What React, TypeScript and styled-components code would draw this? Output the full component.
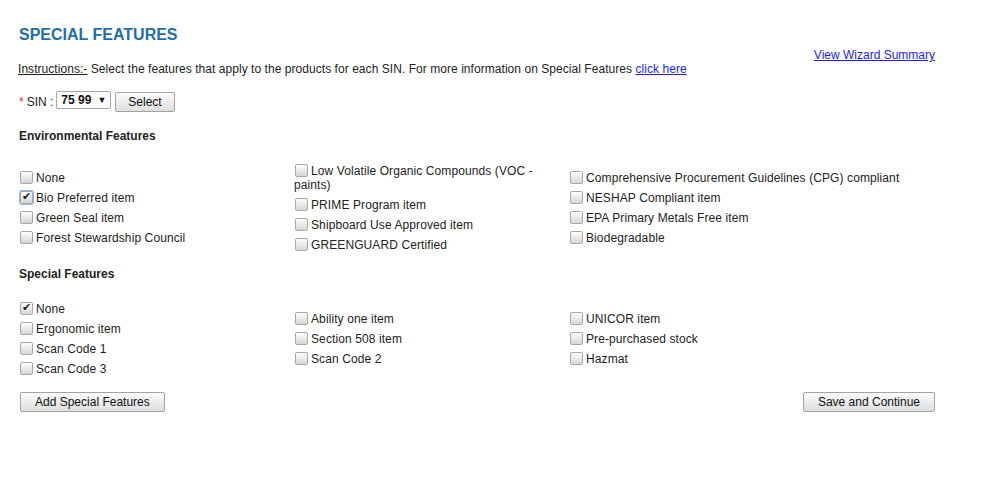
import * as React from 'react';
import styled, { createGlobalStyle } from 'styled-components';

interface Feature {
  title: string;
  checked?: boolean;
  focused?: boolean;
}

const environmental: Feature[][] = [
  [
    { title: 'None' },
    { title: 'Bio Preferred item', checked: true, focused: true },
    { title: 'Green Seal item' },
    { title: 'Forest Stewardship Council' },
  ],
  [
    { title: 'Low Volatile Organic Compounds (VOC - paints)' },
    { title: 'PRIME Program item' },
    { title: 'Shipboard Use Approved item' },
    { title: 'GREENGUARD Certified' },
  ],
  [
    { title: 'Comprehensive Procurement Guidelines (CPG) compliant' },
    { title: 'NESHAP Compliant item' },
    { title: 'EPA Primary Metals Free item' },
    { title: 'Biodegradable' },
  ],
];

const special: Feature[][] = [
  [
    { title: 'None', checked: true },
    { title: 'Ergonomic item' },
    { title: 'Scan Code 1' },
    { title: 'Scan Code 3' },
  ],
  [
    { title: 'Ability one item' },
    { title: 'Section 508 item' },
    { title: 'Scan Code 2' },
  ],
  [
    { title: 'UNICOR item' },
    { title: 'Pre-purchased stock' },
    { title: 'Hazmat' },
  ],
];

const GlobalStyle = createGlobalStyle`
  body {
    margin: 0;
    background: #ffffff;
    font-family: Arial, "Liberation Sans", sans-serif;
    font-size: 12px;
    color: #222222;
  }
`;

const Page = styled.div`
  width: 916px;
  padding: 25px 0 0 19px;
`;

const Title = styled.h1`
  margin: 0;
  font-size: 16px;
  line-height: 20px;
  font-weight: bold;
  color: #1f6ea5;
`;

const SummaryRow = styled.div`
  display: flex;
  justify-content: flex-end;
  margin-top: 3px;
  line-height: 14px;
`;

const Link = styled.a`
  color: #2020ff;
  text-decoration: underline;
  cursor: pointer;
`;

const Instructions = styled.div`
  line-height: 14px;
  margin-left: -1px;
  letter-spacing: 0.05px;
`;

const Underlined = styled.span`
  text-decoration: underline;
`;

const SinRow = styled.div`
  display: flex;
  align-items: center;
  margin-top: 15px;
  height: 22px;
`;

const Required = styled.span`
  color: #e03030;
  margin-right: 3px;
`;

const SelectBox = styled.div`
  display: inline-flex;
  align-items: center;
  height: 16px;
  margin: -4px 4px 0 3px;
  padding: 0 4px 0 4px;
  border: 1px solid #a6a6a6;
  border-radius: 2px;
  font-size: 12px;
  font-weight: bold;
  color: #111111;
`;

const Arrow = styled.span`
  font-size: 9px;
  margin-left: 6px;
`;

const Button = styled.button<{ $pad?: number }>`
  height: 20px;
  padding: 0 ${p => p.$pad ?? 14}px;
  border: 1px solid #a3a3a3;
  border-radius: 2px;
  background: linear-gradient(#fbfbfb, #dedede);
  font-family: Arial, "Liberation Sans", sans-serif;
  font-size: 12px;
  color: #111111;
  cursor: pointer;
`;

const SectionTitle = styled.div<{ $top: number }>`
  font-weight: bold;
  line-height: 14px;
  margin-top: ${p => p.$top}px;
`;

const FeatureGrid = styled.div`
  display: grid;
  grid-template-columns: 275px 275px auto;
  align-items: center;
  margin-top: 18px;
`;

const Column = styled.div`
  display: flex;
  flex-direction: column;
`;

const Item = styled.label`
  display: block;
  padding: 3px 6px 3px 0;
  line-height: 14px;
  letter-spacing: 0.1px;
  cursor: pointer;
`;

const Check = styled.input.attrs({ type: 'checkbox' })<{ $focused?: boolean }>`
  appearance: none;
  width: 13px;
  height: 13px;
  margin: 0 3px 0 1px;
  vertical-align: -2px;
  border: 1px solid #a7a7a7;
  border-radius: 2px;
  background: linear-gradient(#fdfdfd, #d6d6d6);
  position: relative;
  box-shadow: ${p => (p.$focused ? '0 0 0 1px #8fb3ec' : 'none')};

  &:checked::after {
    content: '✔';
    position: absolute;
    left: 1px;
    top: -2px;
    font-size: 11px;
    color: #222222;
  }
`;

const Footer = styled.div`
  display: flex;
  justify-content: space-between;
  margin-top: 13px;
  padding-left: 1px;
`;

const FeatureSection = ({ columns }: { columns: Feature[][] }) => (
  <FeatureGrid>
    {columns.map((col, i) => (
      <Column key={i}>
        {col.map(f => (
          <Item key={f.title}>
            <Check defaultChecked={f.checked} $focused={f.focused} />
            {f.title}
          </Item>
        ))}
      </Column>
    ))}
  </FeatureGrid>
);

export default function App() {
  return (
    <Page>
      <GlobalStyle />
      <Title>SPECIAL FEATURES</Title>
      <SummaryRow>
        <Link>View Wizard Summary</Link>
      </SummaryRow>
      <Instructions>
        <Underlined>Instructions:-</Underlined> Select the features that apply to the products for each SIN. For more
        information on Special Features <Link>click here</Link>
      </Instructions>
      <SinRow>
        <Required>*</Required>SIN :
        <SelectBox>
          75 99<Arrow>▼</Arrow>
        </SelectBox>
        <Button $pad={12}>Select</Button>
      </SinRow>
      <SectionTitle $top={16}>Environmental Features</SectionTitle>
      <FeatureSection columns={environmental} />
      <SectionTitle $top={12}>Special Features</SectionTitle>
      <FeatureSection columns={special} />
      <Footer>
        <Button>Add Special Features</Button>
        <Button>Save and Continue</Button>
      </Footer>
    </Page>
  );
}
